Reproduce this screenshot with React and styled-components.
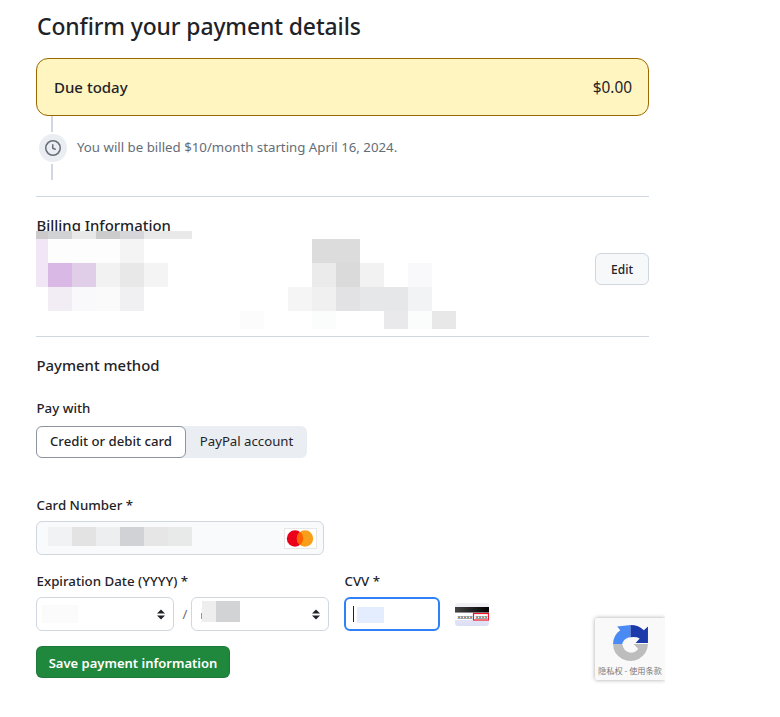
import React from "react";
import styled, { createGlobalStyle } from "styled-components";

const Global = createGlobalStyle`
  html, body { margin: 0; padding: 0; background: #fff; }
  body { font-family: "Noto Sans", "Noto Sans CJK SC", sans-serif; color: #1f2328; font-size: 14px; }
`;

const Page = styled.div`
  position: relative;
  width: 780px;
  height: 717px;
  overflow: hidden;
`;
const Column = styled.main`
  width: 613px;
  margin-left: 36px;
  display: flex;
  flex-direction: column;
`;
const Title = styled.h1`
  margin: 11px 0 0;
  padding-left: 1px;
  font-size: 22.9px;
  line-height: 32px;
  font-weight: 500;
  letter-spacing: -0.1px;
`;
const DueBox = styled.div`
  box-sizing: border-box;
  height: 58px;
  margin-top: 15px;
  padding: 0 16px 0 17px;
  display: flex;
  align-items: center;
  justify-content: space-between;
  background: #fff5c1;
  border: 1px solid #9a6700;
  border-radius: 12px;
  font-size: 15px;
  font-weight: 500;
`;
const Amount = styled.span`
  font-weight: 400;
  font-size: 15.4px;
`;
const Timeline = styled.div`
  display: flex;
  flex-direction: column;
  align-items: flex-start;
  padding-left: 3px;
`;
const Stem = styled.div`
  width: 2px;
  height: 16px;
  margin-left: 12px;
  background: #d0d7de;
`;
const BillRow = styled.div`
  display: flex;
  align-items: center;
  gap: 10px;
  margin: 2px 0;
  height: 28px;
`;
const ClockBadge = styled.div`
  width: 28px;
  height: 28px;
  border-radius: 50%;
  background: #eaeef2;
  display: flex;
  align-items: center;
  justify-content: center;
  color: #656d76;
`;
const BillText = styled.span`
  font-size: 13.25px;
  color: #656d76;
  position: relative;
  top: -1px;
`;
const Divider = styled.hr`
  width: 100%;
  height: 1px;
  border: 0;
  background: #d0d7de;
  margin: ${(p) => p.$top}px 0 0;
`;
const SectionHeading = styled.h2`
  margin: ${(p) => p.$top}px 0 0;
  padding-left: 0.5px;
  font-size: 14.9px;
  line-height: 20px;
  font-weight: 500;
`;
const BillingBody = styled.div`
  height: 100px;
  display: flex;
  justify-content: flex-end;
  align-items: flex-start;
  padding-top: 18px;
  box-sizing: border-box;
`;
const EditButton = styled.button`
  width: 54px;
  height: 32px;
  padding: 0;
  font: 500 12px "Noto Sans", sans-serif;
  color: #1f2328;
  background: #f6f8fa;
  border: 1px solid #d0d7de;
  border-radius: 6px;
`;
const Label = styled.div`
  padding-left: 0.5px;
  font-size: 13.3px;
  line-height: 20px;
  font-weight: 500;
`;
const PayWith = styled(Label)`
  margin-top: 23px;
`;
const Segments = styled.div`
  display: inline-flex;
  align-self: flex-start;
  margin-top: 8px;
  height: 32px;
  background: #eaeef2;
  border-radius: 6px;
`;
const Segment = styled.button`
  box-sizing: border-box;
  height: 32px;
  padding: 0 0 2px;
  width: ${(p) => p.$w}px;
  font: ${(p) => (p.$active ? 500 : 400)} 13.2px "Noto Sans", sans-serif;
  color: #1f2328;
  background: ${(p) => (p.$active ? "#fff" : "transparent")};
  border: ${(p) => (p.$active ? "1px solid #8c959f" : "0")};
  border-radius: 6px;
`;
const CardLabel = styled(Label)`
  margin-top: 37px;
`;
const CardInput = styled.div`
  box-sizing: border-box;
  width: 288px;
  height: 34px;
  margin-top: 6px;
  padding-right: 6px;
  display: flex;
  align-items: center;
  justify-content: flex-end;
  background: #f9fafc;
  border: 1px solid #d0d7de;
  border-radius: 6px;
`;
const ExpiryGrid = styled.div`
  display: flex;
  margin-top: 16px;
`;
const Field = styled.div`
  width: ${(p) => p.$w}px;
  display: flex;
  flex-direction: column;
  gap: 6px;
`;
const ExpiryControls = styled.div`
  display: flex;
  align-items: center;
`;
const SelectBox = styled.div`
  box-sizing: border-box;
  width: 138px;
  height: 34px;
  padding-right: 8px;
  display: flex;
  align-items: center;
  justify-content: flex-end;
  background: #fff;
  border: 1px solid #d0d7de;
  border-radius: 6px;
  color: #1f2328;
`;
const Slash = styled.span`
  box-sizing: border-box;
  width: 17px;
  padding-left: 5px;
  text-align: center;
  color: #656d76;
  font-size: 13px;
`;
const CvvControls = styled.div`
  display: flex;
  align-items: center;
  gap: 15px;
`;
const CvvInput = styled.div`
  box-sizing: border-box;
  width: 96px;
  height: 34px;
  padding-left: 7px;
  display: flex;
  align-items: center;
  background: #fff;
  border: 2px solid #2f81f7;
  border-radius: 6px;
`;
const Caret = styled.span`
  display: block;
  width: 1px;
  height: 16px;
  background: #1f2328;
`;
const SaveButton = styled.button`
  align-self: flex-start;
  width: 194px;
  height: 32px;
  margin-top: 15px;
  padding: 2px 0 0;
  font: 600 13px "Noto Sans", sans-serif;
  color: #fff;
  background: #1f883d;
  border: 1px solid rgba(31, 35, 40, 0.15);
  border-radius: 6px;
`;
const MosaicLayer = styled.svg`
  position: absolute;
  left: 0;
  top: 0;
  pointer-events: none;
`;
const Recaptcha = styled.aside`
  position: absolute;
  left: 595px;
  top: 618px;
  width: 70px;
  height: 62px;
  box-sizing: border-box;
  padding-top: 6px;
  display: flex;
  flex-direction: column;
  align-items: center;
  gap: 3px;
  background: #f9f9f9;
  border-radius: 2px 0 0 2px;
  box-shadow: 0 0 4px rgba(0, 0, 0, 0.35);
  clip-path: inset(-6px 0 -6px -6px);
`;
const RecaptchaText = styled.span`
  font-size: 8.2px;
  line-height: 11px;
  color: #7a7a7a;
  white-space: nowrap;
  font-family: "Noto Sans CJK SC", sans-serif;
`;

const cells = [
  [36, 231, 12, 8, "#cbc9c9"], [48, 231, 24, 8, "#d1d2d3"], [72, 231, 24, 8, "#e8e8e9"], [96, 231, 24, 8, "#cdcccd"],
  [120, 231, 24, 8, "#d5d5da"], [144, 231, 48, 8, "#e9e9ea"],
  [36, 239, 12, 24, "#f1e6f5"], [48, 239, 72, 24, "#fdfdfd"], [120, 239, 24, 24, "#f4f4f4"], [312, 239, 48, 24, "#dcdcdc"],
  [36, 263, 12, 24, "#f1e6f5"], [48, 263, 24, 24, "#d9b8e6"], [72, 263, 24, 24, "#e0cde8"], [96, 263, 24, 24, "#f2f2f2"],
  [120, 263, 24, 24, "#e8e8e8"], [144, 263, 24, 24, "#f4f4f4"], [312, 263, 24, 24, "#ebebeb"], [336, 263, 24, 24, "#dadada"],
  [360, 263, 24, 24, "#f2f2f2"], [408, 263, 24, 24, "#f9f9fb"],
  [48, 287, 24, 24, "#f2ecf5"], [72, 287, 24, 24, "#f9f8fb"], [96, 287, 24, 24, "#fafafa"], [120, 287, 24, 24, "#f0f0f3"],
  [288, 287, 24, 24, "#f5f5f5"], [312, 287, 24, 24, "#f0f0f0"], [336, 287, 24, 24, "#e2e2e4"], [360, 287, 48, 24, "#e6e7e9"],
  [408, 287, 24, 24, "#f2f3f5"],
  [240, 311, 24, 18, "#fbfcfb"], [312, 311, 24, 18, "#fbfdfd"], [384, 311, 24, 18, "#e9e9eb"], [408, 311, 24, 18, "#fbfdfc"],
  [432, 311, 24, 18, "#e8e8e8"],
  [48, 527, 24, 19, "#f1f2f3"], [72, 527, 24, 19, "#e2e3e2"], [96, 527, 24, 19, "#eceeef"], [120, 527, 24, 19, "#d1d2d6"],
  [144, 527, 24, 19, "#e5e6e5"], [168, 527, 24, 19, "#e8e9e9"],
  [42, 605, 36, 18, "#fbfbfb"], [202, 601, 14, 21, "#eeeeee"], [216, 601, 24, 21, "#d2d3d5"], [201, 613, 1, 6, "#c98a5a"],
  [357, 607, 27, 16, "#e3edfe"],
];

const Clock = () => (
  <svg width="16" height="16" viewBox="0 0 16 16" fill="currentColor">
    <path d="M8 0a8 8 0 1 1 0 16A8 8 0 0 1 8 0ZM1.5 8a6.5 6.5 0 1 0 13 0 6.5 6.5 0 0 0-13 0Zm7-3.25v2.992l2.028.812a.75.75 0 0 1-.557 1.392l-2.5-1A.751.751 0 0 1 7 8.25v-3.5a.75.75 0 0 1 1.5 0Z" />
  </svg>
);

const Mastercard = () => (
  <svg width="33" height="21" viewBox="0 0 33 21">
    <rect width="33" height="21" fill="#fff" />
    <rect x="0.5" y="0.5" width="32" height="20" fill="none" stroke="#e6e6e6" />
    <circle cx="11" cy="10.5" r="8.2" fill="#eb001b" />
    <circle cx="21" cy="10.5" r="8.2" fill="#f79e1b" />
    <path d="M16 4a8.2 8.2 0 0 1 0 13 8.2 8.2 0 0 1 0-13Z" fill="#ff5f00" />
  </svg>
);

const Chevrons = () => (
  <svg width="8" height="11" viewBox="0 0 8 11" fill="currentColor">
    <path d="M4 0.5 8 4.5H0ZM4 10.5 0 6.5h8Z" />
  </svg>
);

const CvvCard = () => (
  <svg width="34" height="23" viewBox="0 0 34 23">
    <defs>
      <linearGradient id="cardBg" x1="0" y1="0" x2="0" y2="1">
        <stop offset="0" stopColor="#f2f2f4" />
        <stop offset="1" stopColor="#dcdff5" />
      </linearGradient>
      <linearGradient id="stripe" x1="0" y1="0" x2="1" y2="0">
        <stop offset="0" stopColor="#444" />
        <stop offset="1" stopColor="#000" />
      </linearGradient>
    </defs>
    <rect width="34" height="23" rx="3" fill="url(#cardBg)" />
    <rect y="4" width="34" height="5.5" fill="url(#stripe)" />
    <rect y="10" width="34" height="7" fill="#fff" />
    <text x="2.5" y="15.5" fontSize="6" fontFamily="Liberation Sans, sans-serif" fill="#000">xxxxx</text>
    <rect x="18.5" y="10.5" width="15" height="6.5" fill="#fff" stroke="#f01628" strokeWidth="1.2" />
    <text x="20.5" y="15.5" fontSize="6" fontFamily="Liberation Sans, sans-serif" fill="#000">xxxx</text>
  </svg>
);

const RecaptchaLogo = () => (
  <svg width="37" height="38" viewBox="0 0 36 37">
    <path d="M1 19.5H10Q10.5 16 14 14Q16 13 18 13V1L5 2.5L8 6Q1 11 1 19.5Z" fill="#4a8af4" />
    <path d="M18 1Q26 1 31 6L35 2.5V18.5H23L27 14Q23 12 18 13Z" fill="#1c3aa9" />
    <path d="M1 19.5H10Q11 27 18 28Q23 28 25.5 24L21 19.5H35Q34.5 29 26 34Q18 38 10 34Q1 29 1 19.5Z" fill="#bdbdbd" />
  </svg>
);

export default function App() {
  return (
    <Page>
      <Global />
      <Column>
        <Title>Confirm your payment details</Title>
        <DueBox>
          <span>Due today</span>
          <Amount>$0.00</Amount>
        </DueBox>
        <Timeline>
          <Stem />
          <BillRow>
            <ClockBadge><Clock /></ClockBadge>
            <BillText>You will be billed $10/month starting April 16, 2024.</BillText>
          </BillRow>
          <Stem />
        </Timeline>
        <Divider $top={16} />
        <SectionHeading $top={18}>Billing Information</SectionHeading>
        <BillingBody>
          <EditButton>Edit</EditButton>
        </BillingBody>
        <Divider $top={1} />
        <SectionHeading $top={18}>Payment method</SectionHeading>
        <PayWith>Pay with</PayWith>
        <Segments>
          <Segment $active $w={150}>Credit or debit card</Segment>
          <Segment $w={121}>PayPal account</Segment>
        </Segments>
        <CardLabel>Card Number *</CardLabel>
        <CardInput><Mastercard /></CardInput>
        <ExpiryGrid>
          <Field $w={308}>
            <Label>Expiration Date (YYYY) *</Label>
            <ExpiryControls>
              <SelectBox><Chevrons /></SelectBox>
              <Slash>/</Slash>
              <SelectBox><Chevrons /></SelectBox>
            </ExpiryControls>
          </Field>
          <Field $w={200}>
            <Label>CVV *</Label>
            <CvvControls>
              <CvvInput><Caret /></CvvInput>
              <CvvCard />
            </CvvControls>
          </Field>
        </ExpiryGrid>
        <SaveButton>Save payment information</SaveButton>
      </Column>
      <MosaicLayer width="780" height="717" aria-hidden="true">
        {cells.map(([x, y, w, h, fill], i) => (
          <rect key={i} x={x} y={y} width={w} height={h} fill={fill} />
        ))}
      </MosaicLayer>
      <Recaptcha>
        <RecaptchaLogo />
        <RecaptchaText>隐私权 - 使用条款</RecaptchaText>
      </Recaptcha>
    </Page>
  );
}
